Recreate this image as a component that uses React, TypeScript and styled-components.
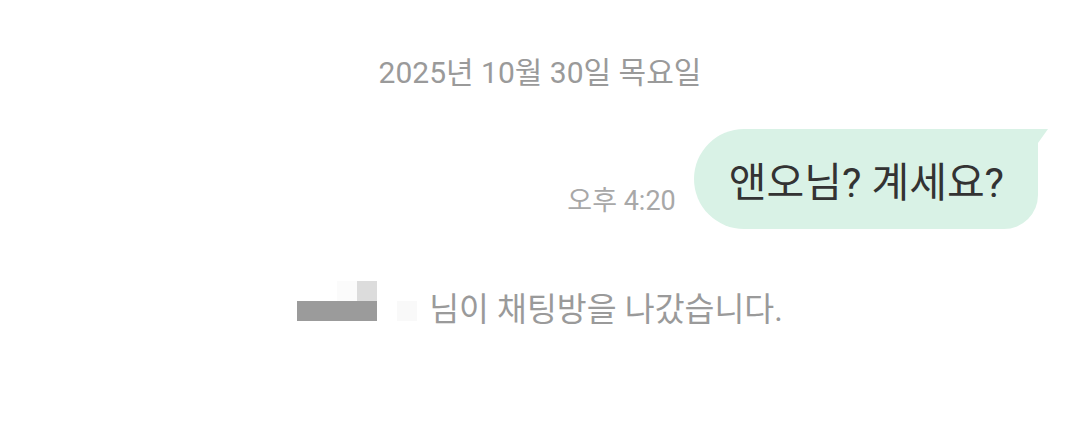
import styled, { createGlobalStyle } from 'styled-components';

const GlobalStyle = createGlobalStyle`
  html, body {
    margin: 0;
    padding: 0;
    background: #ffffff;
    font-family: Roboto, "Noto Sans CJK KR", sans-serif;
  }
`;

const ChatScreen = styled.div`
  width: 1080px;
  height: 424px;
  display: flex;
  flex-direction: column;
  box-sizing: border-box;
  padding-top: 54px;
  background: #ffffff;
`;

const DateLabel = styled.div`
  text-align: center;
  font-size: 30px;
  line-height: 38px;
  color: #9a9a9a;
`;

const MessageRow = styled.div`
  display: flex;
  justify-content: flex-end;
  align-items: flex-end;
  gap: 18px;
  margin-top: 37px;
  padding-right: 42px;
`;

const Time = styled.span`
  font-size: 27px;
  line-height: 34px;
  color: #a8a8a8;
  margin-bottom: 11px;
`;

const Bubble = styled.div`
  position: relative;
  height: 100px;
  display: flex;
  align-items: center;
  padding: 0 34px 0 35px;
  background: #d9f2e6;
  border-radius: 50px 0 34px 50px;
  font-size: 41px;
  color: #333333;

  &::after {
    content: '';
    position: absolute;
    top: 0;
    right: -10px;
    width: 10px;
    height: 14px;
    background: #d9f2e6;
    clip-path: polygon(0 0, 100% 0, 0 100%);
  }
`;

const SystemRow = styled.div`
  display: flex;
  justify-content: center;
  align-items: flex-end;
  gap: 12px;
  margin-top: 52px;
`;

const Mosaic = styled.div`
  display: grid;
  grid-template-columns: repeat(6, 20px);
  grid-template-rows: repeat(2, 20px);
`;

const Tile = styled.div<{ $shade: string }>`
  background: ${p => p.$shade};
`;

const SystemText = styled.span`
  font-size: 32.5px;
  line-height: 40px;
  color: #9a9a9a;
  margin-bottom: -9px;
`;

const tiles = [
  '#ffffff', '#ffffff', '#fbfbfb', '#dcdcdc', '#ffffff', '#ffffff',
  '#9b9b9b', '#9b9b9b', '#9b9b9b', '#9b9b9b', '#ffffff', '#f9f9f9',
];

export default function App() {
  return (
    <ChatScreen>
      <GlobalStyle />
      <DateLabel>2025년 10월 30일 목요일</DateLabel>
      <MessageRow>
        <Time>오후 4:20</Time>
        <Bubble>앤오님? 계세요?</Bubble>
      </MessageRow>
      <SystemRow>
        <Mosaic>
          {tiles.map((c, i) => <Tile key={i} $shade={c} />)}
        </Mosaic>
        <SystemText>님이 채팅방을 나갔습니다.</SystemText>
      </SystemRow>
    </ChatScreen>
  );
}
